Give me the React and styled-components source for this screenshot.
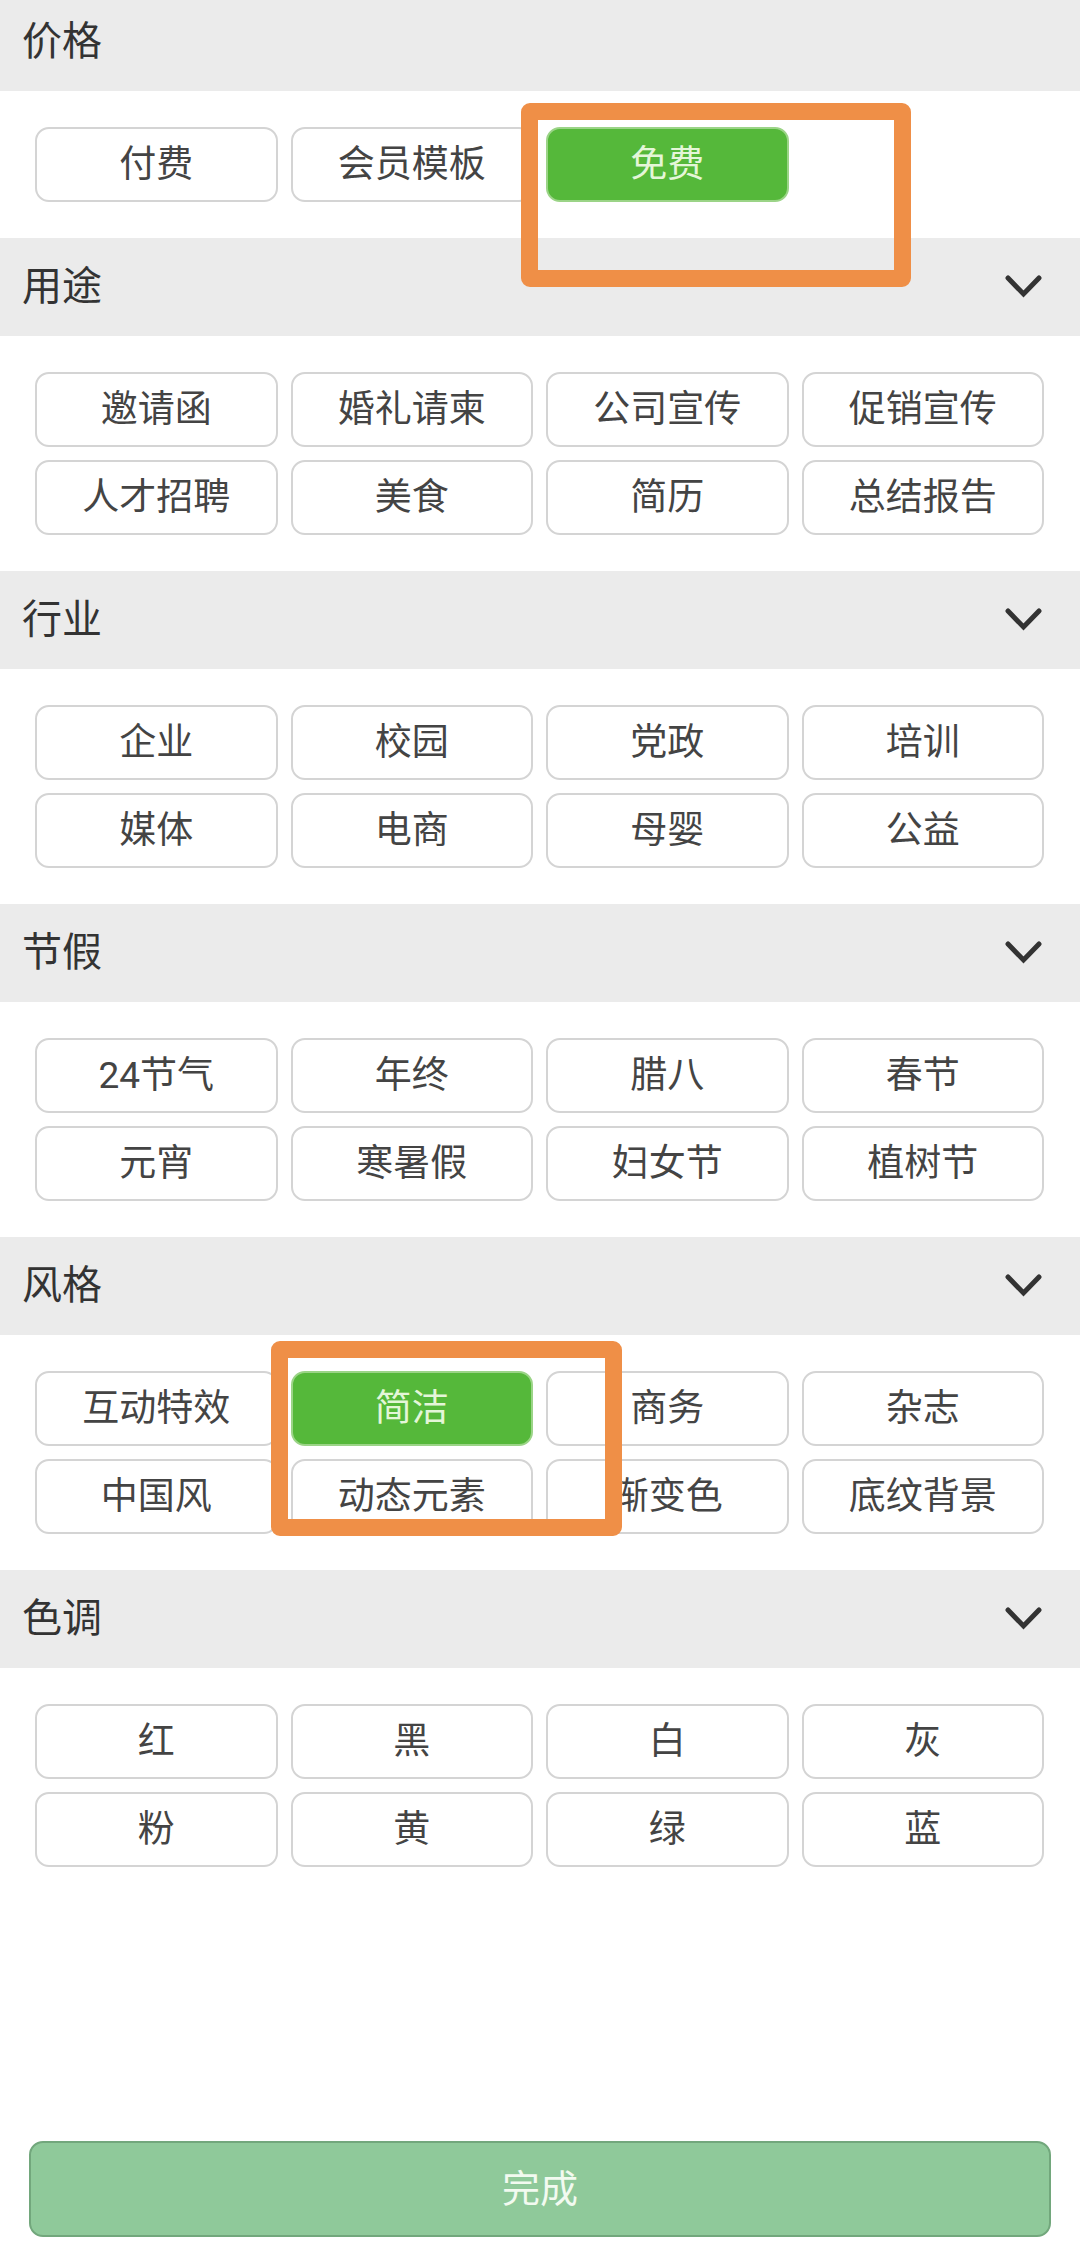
import React from "react";
import styled, { createGlobalStyle } from "styled-components";

const Global = createGlobalStyle`
  html, body { margin: 0; padding: 0; background: #ffffff; }
  body { font-family: Roboto, "Noto Sans CJK SC", "Noto Sans", sans-serif; }
  * { box-sizing: border-box; }
`;

const Screen = styled.div`
  position: relative;
  width: 1080px;
  height: 2266px;
  overflow: hidden;
  background: #ffffff;
  display: flex;
  flex-direction: column;
`;

const Sections = styled.div`
  display: flex;
  flex-direction: column;
  margin-top: -7px;
`;

const Header = styled.div`
  height: 98px;
  background: #ebebeb;
  display: flex;
  align-items: center;
  justify-content: space-between;
  padding: 0 38px 0 22px;
`;

const Title = styled.span`
  font-size: 40px;
  line-height: 1;
  color: #333333;
`;

const Chevron = styled.svg`
  width: 37px;
  height: 24px;
  display: block;
`;

const Grid = styled.div`
  display: grid;
  grid-template-columns: repeat(4, 1fr);
  gap: 13px;
  padding: 36px 36px 36px 35px;
`;

const Tag = styled.div`
  height: 75px;
  border-radius: 14px;
  border: 2px solid ${(p) => (p.$active ? "#9bd487" : "#d4d4d4")};
  background: ${(p) => (p.$active ? "#55b83a" : "#ffffff")};
  color: ${(p) => (p.$active ? "#e4f6d8" : "#444444")};
  font-size: 37px;
  line-height: 1;
  display: flex;
  align-items: center;
  justify-content: center;
`;

const Footer = styled.div`
  margin-top: auto;
  padding: 0 29px 29px 29px;
`;

const DoneButton = styled.div`
  height: 96px;
  border-radius: 14px;
  border: 2px solid #72a77c;
  background: #8fc99a;
  color: #f2faf0;
  font-size: 38px;
  line-height: 1;
  display: flex;
  align-items: center;
  justify-content: center;
`;

const Highlight = styled.div`
  position: absolute;
  border: 17px solid #ef8f47;
  border-radius: 9px;
  pointer-events: none;
`;

const sections = [
  { title: "价格", collapsible: false, items: ["付费", "会员模板", "免费"], active: ["免费"] },
  { title: "用途", collapsible: true, items: ["邀请函", "婚礼请柬", "公司宣传", "促销宣传", "人才招聘", "美食", "简历", "总结报告"] },
  { title: "行业", collapsible: true, items: ["企业", "校园", "党政", "培训", "媒体", "电商", "母婴", "公益"] },
  { title: "节假", collapsible: true, items: ["24节气", "年终", "腊八", "春节", "元宵", "寒暑假", "妇女节", "植树节"] },
  { title: "风格", collapsible: true, items: ["互动特效", "简洁", "商务", "杂志", "中国风", "动态元素", "渐变色", "底纹背景"], active: ["简洁"] },
  { title: "色调", collapsible: true, items: ["红", "黑", "白", "灰", "粉", "黄", "绿", "蓝"] },
];

const ChevronIcon = () => (
  <Chevron viewBox="0 0 37 24">
    <polyline points="3,3 18.5,19 34,3" fill="none" stroke="#333333" strokeWidth="5" strokeLinecap="round" strokeLinejoin="miter" />
  </Chevron>
);

export default function App() {
  return (
    <>
      <Global />
      <Screen>
        <Sections>
          {sections.map((s) => (
            <section key={s.title}>
              <Header>
                <Title>{s.title}</Title>
                {s.collapsible && <ChevronIcon />}
              </Header>
              <Grid>
                {s.items.map((it) => (
                  <Tag key={it} $active={(s.active || []).includes(it)}>
                    {it}
                  </Tag>
                ))}
              </Grid>
            </section>
          ))}
        </Sections>
        <Footer>
          <DoneButton>完成</DoneButton>
        </Footer>
        <Highlight style={{ left: 521, top: 103, width: 390, height: 184 }} />
        <Highlight style={{ left: 271, top: 1341, width: 351, height: 195 }} />
      </Screen>
    </>
  );
}
